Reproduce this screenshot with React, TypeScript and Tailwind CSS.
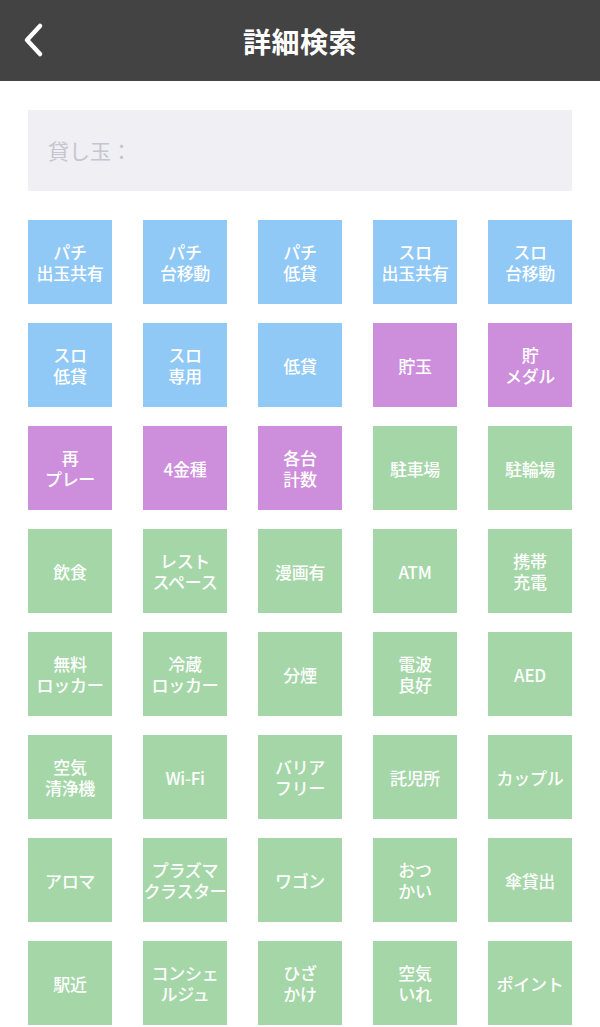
type Tone = 'blue' | 'purple' | 'green'

const tones: Record<Tone, string> = {
  blue: 'bg-[#90c8f6]',
  purple: 'bg-[#cd8fdb]',
  green: 'bg-[#a5d6a7]',
}

const items: { label: string[]; tone: Tone }[] = [
  { label: ['パチ', '出玉共有'], tone: 'blue' },
  { label: ['パチ', '台移動'], tone: 'blue' },
  { label: ['パチ', '低貸'], tone: 'blue' },
  { label: ['スロ', '出玉共有'], tone: 'blue' },
  { label: ['スロ', '台移動'], tone: 'blue' },
  { label: ['スロ', '低貸'], tone: 'blue' },
  { label: ['スロ', '専用'], tone: 'blue' },
  { label: ['低貸'], tone: 'blue' },
  { label: ['貯玉'], tone: 'purple' },
  { label: ['貯', 'メダル'], tone: 'purple' },
  { label: ['再', 'プレー'], tone: 'purple' },
  { label: ['4金種'], tone: 'purple' },
  { label: ['各台', '計数'], tone: 'purple' },
  { label: ['駐車場'], tone: 'green' },
  { label: ['駐輪場'], tone: 'green' },
  { label: ['飲食'], tone: 'green' },
  { label: ['レスト', 'スペース'], tone: 'green' },
  { label: ['漫画有'], tone: 'green' },
  { label: ['ATM'], tone: 'green' },
  { label: ['携帯', '充電'], tone: 'green' },
  { label: ['無料', 'ロッカー'], tone: 'green' },
  { label: ['冷蔵', 'ロッカー'], tone: 'green' },
  { label: ['分煙'], tone: 'green' },
  { label: ['電波', '良好'], tone: 'green' },
  { label: ['AED'], tone: 'green' },
  { label: ['空気', '清浄機'], tone: 'green' },
  { label: ['Wi-Fi'], tone: 'green' },
  { label: ['バリア', 'フリー'], tone: 'green' },
  { label: ['託児所'], tone: 'green' },
  { label: ['カップル'], tone: 'green' },
  { label: ['アロマ'], tone: 'green' },
  { label: ['プラズマ', 'クラスター'], tone: 'green' },
  { label: ['ワゴン'], tone: 'green' },
  { label: ['おつ', 'かい'], tone: 'green' },
  { label: ['傘貸出'], tone: 'green' },
  { label: ['駅近'], tone: 'green' },
  { label: ['コンシェ', 'ルジュ'], tone: 'green' },
  { label: ['ひざ', 'かけ'], tone: 'green' },
  { label: ['空気', 'いれ'], tone: 'green' },
  { label: ['ポイント'], tone: 'green' },
]

const font = { fontFamily: '"Noto Sans CJK JP", "Noto Sans", sans-serif' }

export default function App() {
  return (
    <div className="min-h-screen w-[600px] bg-white" style={font}>
      <header className="relative flex h-[81px] items-center justify-center bg-[#434343]">
        <button className="absolute left-[20px] top-[22px] text-white">
          <svg width="26" height="36" viewBox="0 0 26 36" fill="none">
            <polyline
              points="20,4 7,18 20,32"
              stroke="currentColor"
              strokeWidth="4.5"
              strokeLinecap="round"
              strokeLinejoin="round"
            />
          </svg>
        </button>
        <h1 className="text-[28px] font-bold tracking-[0.5px] text-white">詳細検索</h1>
      </header>

      <div className="px-[28px] pt-[29px]">
        <div className="flex h-[81px] items-center bg-[#efeff4] px-[20px]">
          <input
            placeholder="貸し玉："
            className="w-full bg-transparent text-[21px] text-[#333] outline-none placeholder:text-[#c6c5cf]"
          />
        </div>

        <div className="mt-[29px] grid grid-cols-[repeat(5,84px)] gap-x-[31px] gap-y-[19px]">
          {items.map((item, i) => (
            <button
              key={i}
              className={`flex h-[84px] w-[84px] items-center justify-center ${tones[item.tone]} text-white`}
            >
              <span className="whitespace-pre text-center text-[17px] font-medium leading-[21px] tracking-[-0.3px]">
                {item.label.join('\n')}
              </span>
            </button>
          ))}
        </div>
      </div>
    </div>
  )
}
